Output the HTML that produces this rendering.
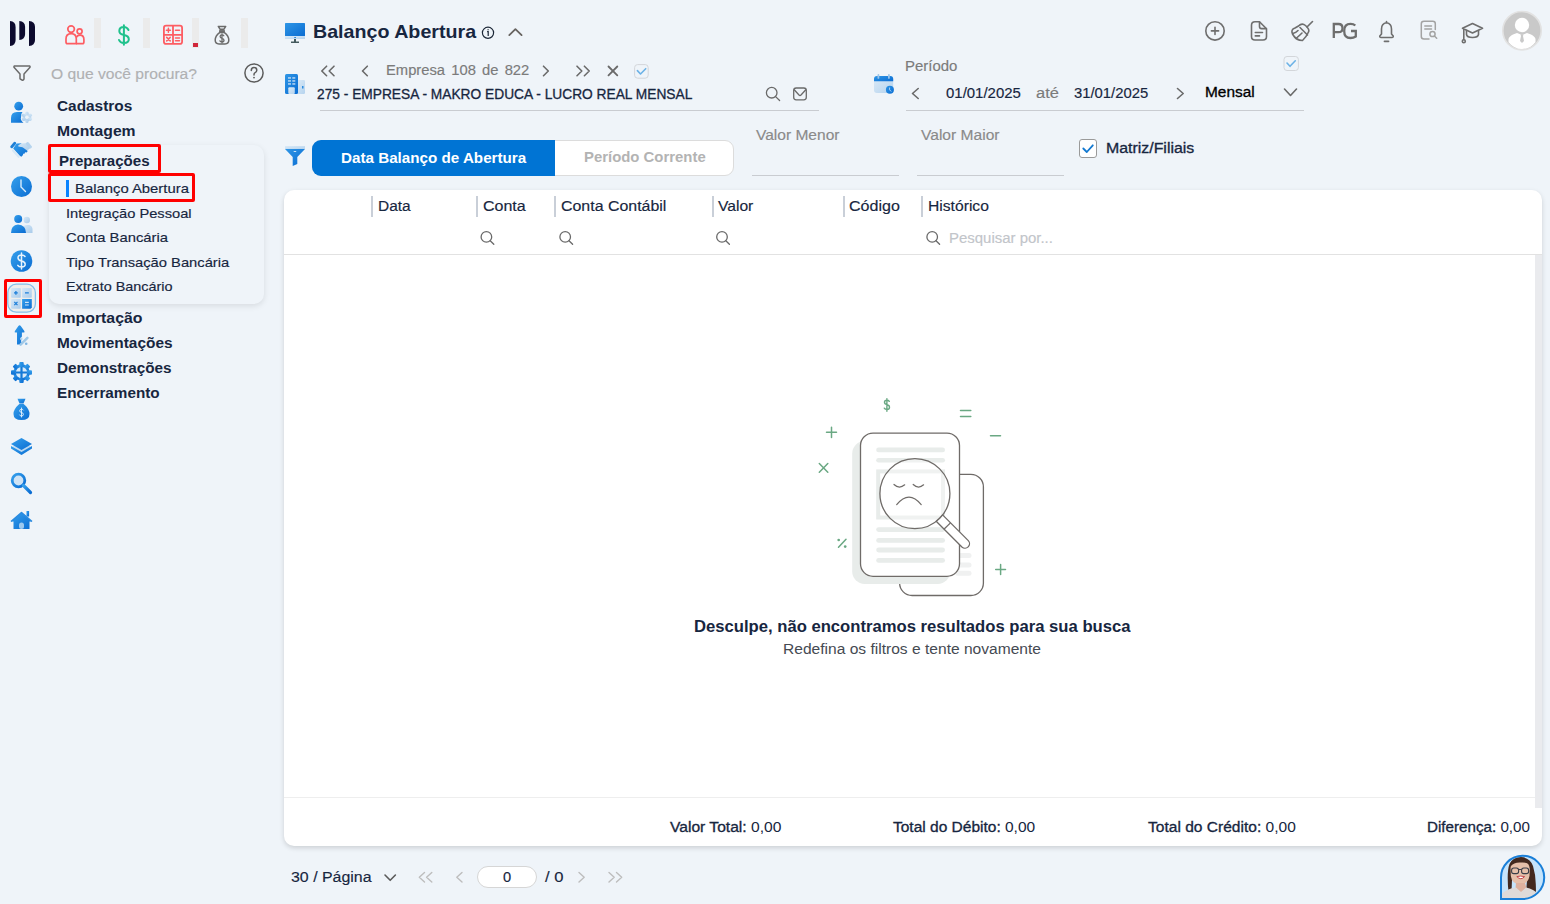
<!DOCTYPE html>
<html><head><meta charset="utf-8"><title>Balanço Abertura</title>
<style>
html,body{margin:0;padding:0;}
body{width:1550px;height:904px;overflow:hidden;background:#eff4f9;font-family:"Liberation Sans",sans-serif;position:relative;}
.t{position:absolute;white-space:nowrap;line-height:1;transform-origin:0 0;}
.a{position:absolute;}
svg{position:absolute;overflow:visible;}
</style></head><body>
<!-- submenu panel -->
<div class="a" style="left:49px;top:145px;width:215px;height:159px;border-radius:10px;background:#eff4f9;box-shadow:0 2px 6px rgba(0,0,0,0.10);"></div>
<!-- red boxes -->
<div class="a" style="left:48px;top:144px;width:113px;height:29px;box-sizing:border-box;border:3px solid #ff0000;border-radius:2px;"></div>
<div class="a" style="left:48px;top:173px;width:147px;height:29px;box-sizing:border-box;border:3px solid #ff0000;border-radius:2px;"></div>
<div class="a" style="left:66px;top:180px;width:3px;height:17px;background:#0a84ff;"></div>
<div class="a" style="left:4px;top:279px;width:38px;height:39px;box-sizing:border-box;border:3px solid #ff0000;border-radius:2px;"></div>
<!-- top app separators -->
<div class="a" style="left:94px;top:18px;width:7px;height:30px;background:#ebebeb;"></div>
<div class="a" style="left:143px;top:18px;width:7px;height:30px;background:#ebebeb;"></div>
<div class="a" style="left:192px;top:18px;width:7px;height:30px;background:#ebebeb;"></div>
<div class="a" style="left:241px;top:18px;width:7px;height:30px;background:#ebebeb;"></div>
<div class="a" style="left:193px;top:43px;width:5px;height:4px;background:#d0263a;"></div>
<!-- underlines -->
<div class="a" style="left:320px;top:110px;width:499px;height:1px;background:#c9ccd1;"></div>
<div class="a" style="left:906px;top:110px;width:398px;height:1px;background:#c9ccd1;"></div>
<div class="a" style="left:752px;top:175px;width:147px;height:1px;background:#c9ccd1;"></div>
<div class="a" style="left:917px;top:175px;width:147px;height:1px;background:#c9ccd1;"></div>
<!-- segmented -->
<div class="a" style="left:312px;top:140px;width:422px;height:36px;box-sizing:border-box;border:1px solid #dcdcdc;border-radius:9px;background:#fff;"></div>
<div class="a" style="left:312px;top:140px;width:243px;height:36px;border-radius:9px 0 0 9px;background:#0074d4;"></div>
<!-- checkbox Matriz -->
<div class="a" style="left:1079px;top:139px;width:18px;height:19px;box-sizing:border-box;border:1px solid #9a9a9a;border-radius:3px;background:#fff;"></div>
<!-- table card -->
<div class="a" style="left:284px;top:190px;width:1258px;height:656px;border-radius:10px;background:#fff;box-shadow:0 2px 5px rgba(0,0,0,0.15);"></div>
<div class="a" style="left:284px;top:254px;width:1258px;height:1px;background:#e2e2e2;"></div>
<div class="a" style="left:1535px;top:255px;width:7px;height:553px;background:#eaebee;"></div>
<div class="a" style="left:284px;top:797px;width:1251px;height:1px;background:#eeeeee;"></div>
<!-- column separators -->
<div class="a" style="left:371px;top:196px;width:2px;height:21px;background:#c9cfd8;"></div>
<div class="a" style="left:476px;top:196px;width:2px;height:21px;background:#c9cfd8;"></div>
<div class="a" style="left:554px;top:196px;width:2px;height:21px;background:#c9cfd8;"></div>
<div class="a" style="left:712px;top:196px;width:2px;height:21px;background:#c9cfd8;"></div>
<div class="a" style="left:843px;top:196px;width:2px;height:21px;background:#c9cfd8;"></div>
<div class="a" style="left:921px;top:196px;width:2px;height:21px;background:#c9cfd8;"></div>
<!-- pagination input -->
<div class="a" style="left:477px;top:866px;width:60px;height:22px;box-sizing:border-box;border:1px solid #d6d6d6;border-radius:11px;background:#fff;"></div>
<svg style="left:0;top:0" width="48" height="540" viewBox="0 0 48 540">
<defs>
<linearGradient id="gb" x1="0" y1="0" x2="1" y2="1"><stop offset="0" stop-color="#36a0ec"/><stop offset="1" stop-color="#0a6cd2"/></linearGradient>
<linearGradient id="gl" x1="0" y1="0" x2="1" y2="1"><stop offset="0" stop-color="#d6e8f7"/><stop offset="1" stop-color="#a9cbea"/></linearGradient>
</defs>
<!-- logo -->
<g fill="#0c0a2e">
<path d="M10 21 Q15.6 21.5 15.6 27 L15.6 40 Q15.6 45.5 10 46 Z"/>
<path d="M19.3 21 Q25.1 21.5 25.1 27 L25.1 34 Q25.1 39.5 19.3 40 Z"/>
<path d="M29 21 Q35 21.5 35 27 L35 40 Q35 45.5 29 46 Z"/>
</g>
<!-- filter outline -->
<path d="M14.5 66 L29.5 66 Q30.5 66.5 29.8 67.6 L24 74 L24 79 Q23.5 80.5 22 80 L20 78.8 L20 74 L14.2 67.6 Q13.5 66.5 14.5 66 Z" fill="none" stroke="#6b6b6b" stroke-width="1.5" stroke-linejoin="round"/>
<!-- user gear -->
<circle cx="18.7" cy="106.2" r="4.4" fill="url(#gb)"/>
<path d="M11 122.8 L11 118 Q11 112 17 112 L22.5 112 Q20.5 114 21 117.5 Q20 120 23.5 122.8 Z" fill="url(#gb)"/>
<g transform="translate(26.9 117.3)" fill="url(#gl)">
<circle r="4.3"/>
<rect x="-1.5" y="-5.6" width="3" height="11.2" rx="0.9"/>
<rect x="-1.5" y="-5.6" width="3" height="11.2" rx="0.9" transform="rotate(60)"/>
<rect x="-1.5" y="-5.6" width="3" height="11.2" rx="0.9" transform="rotate(120)"/>
<circle r="1.8" fill="#eff4f9"/>
</g>
<!-- handshake -->
<g>
<path d="M21.8 143.5 L27.2 143 L28.5 142.6 L31.8 146.4 L28.6 149.6 L26.5 150.3 L22.5 147.3 L18.5 146.5 L18.5 145 Z" fill="url(#gl)"/>
<rect x="27.4" y="141.6" width="3" height="7.2" rx="1.2" transform="rotate(-40 29 145.2)" fill="#b6d4ee"/>
<path d="M13.2 148.6 L16.5 143.6 L21.8 143.3 L18.4 145.2 L18.4 146.6 L22.6 147.3 L27.8 151 L26.6 152.4 L25 152.2 L24.8 153.6 L23.3 153.8 L22.8 155.2 L21.3 156.8 L19.8 155.8 Z" fill="url(#gb)"/>
<rect x="11.8" y="141.4" width="2.9" height="7.3" rx="1.2" transform="rotate(40 13.3 145)" fill="#1f80d6"/>
<path d="M13 150.5 L18.7 156.8" stroke="#d7e8f6" stroke-width="2.2" stroke-linecap="round"/>
</g>
<!-- clock -->
<circle cx="21.5" cy="186.5" r="10.5" fill="url(#gb)"/>
<path d="M21 180 L21 187 L25.5 191.5" fill="none" stroke="#d9ecfb" stroke-width="1.4" stroke-linecap="round"/>
<!-- people -->
<circle cx="26.8" cy="220" r="3.2" fill="url(#gl)"/>
<path d="M23 233 L23 227 Q24 225 27 225 L29 225 Q32 225.5 32.5 229 L32.5 233 Z" fill="url(#gl)"/>
<circle cx="18.2" cy="219" r="4" fill="url(#gb)"/>
<path d="M11 233 Q11 225 18 224.5 Q26 225 26 233 Z" fill="url(#gb)"/>
<!-- dollar -->
<circle cx="21.5" cy="261" r="10.8" fill="url(#gb)"/>
<path d="M25 256.5 Q24 255 21.5 255 Q18 255 18 257.8 Q18 260.3 21.5 261 Q25.2 261.8 25.2 264.3 Q25.2 267 21.5 267 Q18.7 267 17.8 265.3 M21.5 253 L21.5 269" fill="none" stroke="#e8f3fc" stroke-width="1.5" stroke-linecap="round"/>
<!-- calculator selected -->
<rect x="7.8" y="284.2" width="27.6" height="28" rx="8.5" fill="#eeeeec" stroke="#86bde8" stroke-width="1.3"/>
<rect x="11.1" y="288" width="9.7" height="9.7" rx="0.8" fill="url(#gl)"/>
<rect x="22.1" y="288" width="9.7" height="9.7" rx="0.8" fill="url(#gl)"/>
<rect x="11.1" y="299" width="9.7" height="9.7" rx="0.8" fill="url(#gl)"/>
<path d="M22.1 299 L31.8 299 L31.8 307.5 L30.6 308.7 L22.1 308.7 Z" fill="url(#gb)"/>
<path d="M15.9 291 L15.9 294.8 M14 292.9 L17.8 292.9 M25 292.9 L28.8 292.9 M14.3 301.9 L17.5 305.1 M17.5 301.9 L14.3 305.1" stroke="#1d7fd9" stroke-width="1.3"/>
<path d="M25 302.4 L28.8 302.4 M25 305 L28.8 305" stroke="#cfe4f6" stroke-width="1.1"/>
<!-- arrow percent -->
<path d="M19.6 325.2 Q20.2 325.2 20.8 326 L24.3 331 Q25.2 332.6 23.6 332.6 L21.9 332.6 L21.9 336.5 L20.8 338 L21.9 339.5 L20.8 341 L21.9 342.5 L21.9 344.5 L17 344.5 L17 332.6 L15.6 332.6 Q14 332.6 14.9 331 L18.4 326 Q19 325.2 19.6 325.2 Z" fill="url(#gb)"/>
<path d="M20.6 344.6 L27.4 337.8" stroke="#9fc8e8" stroke-width="2.5" stroke-linecap="round"/>
<circle cx="21.3" cy="338.7" r="1.3" fill="#b7d6ee"/><circle cx="26.2" cy="343.7" r="1.3" fill="#7fb6e3"/>
<!-- gear -->
<g transform="translate(21.5 372.5)">
<g fill="url(#gb)">
<circle r="8.3"/>
<rect x="-2.2" y="-10.5" width="4.4" height="21" rx="1"/>
<rect x="-2.2" y="-10.5" width="4.4" height="21" rx="1" transform="rotate(45)"/>
<rect x="-2.2" y="-10.5" width="4.4" height="21" rx="1" transform="rotate(90)"/>
<rect x="-2.2" y="-10.5" width="4.4" height="21" rx="1" transform="rotate(135)"/>
</g>
<circle r="5.6" fill="#d8eaf8"/>
<path d="M0 -5.6 L0 5.6 M-5.6 0 L5.6 0" stroke="#1479d6" stroke-width="2.2"/>
</g>
<!-- money bag -->
<path d="M17.5 398.8 L25.5 398.8 L23.5 403.5 L19.5 403.5 Z" fill="url(#gb)"/>
<path d="M19.3 404 L23.7 404 Q29.5 409 29.5 414 Q29.5 420 21.5 420 Q13.5 420 13.5 414 Q13.5 409 19.3 404 Z" fill="url(#gb)"/>
<path d="M23.3 410 Q22.8 409.2 21.5 409.2 Q19.7 409.2 19.7 410.8 Q19.7 412.2 21.5 412.5 Q23.4 412.9 23.4 414.4 Q23.4 416 21.5 416 Q20 416 19.6 415 M21.5 408 L21.5 417" fill="none" stroke="#e6f2fc" stroke-width="0.9" stroke-linecap="round"/>
<!-- layers -->
<path d="M21.5 441.5 L32 447.5 L21.5 455 L11 447.5 Z" fill="url(#gl)"/>
<path d="M11 446 L21.5 452 L32 446 L32 448.5 L21.5 455 L11 448.5 Z" fill="url(#gb)"/>
<path d="M21.5 438 L32 444 L21.5 450 L11 444 Z" fill="url(#gb)"/>
<!-- search -->
<circle cx="18.5" cy="480.5" r="6.3" fill="#cfe3f5" stroke="url(#gb)" stroke-width="2.8"/>
<path d="M23.5 485.5 L30.5 492.5" stroke="url(#gb)" stroke-width="3.2" stroke-linecap="round"/>
<!-- home -->
<path d="M21.5 512.5 L32 521.5 L29.5 521.5 L29.5 529 L13.5 529 L13.5 521.5 L11 521.5 Z" fill="url(#gb)"/>
<rect x="26.5" y="511" width="2.6" height="5.5" fill="url(#gb)"/>
<path d="M11 521.5 L21.5 512.5 L32 521.5" fill="none" stroke="#2a8be0" stroke-width="1.6" stroke-linejoin="round"/>
<rect x="19" y="522.5" width="5" height="6.5" rx="2.5" fill="#9cc8ee"/>
</svg>
<svg style="left:50px;top:10px" width="220" height="80" viewBox="50 10 220 80">
<!-- family (coral) -->
<g fill="none" stroke="#fd5d63" stroke-width="1.7" stroke-linejoin="round">
<circle cx="71.1" cy="29.1" r="3.3"/>
<circle cx="79.6" cy="31.3" r="2.5"/>
<path d="M76.3 43.7 L67.6 43.7 Q66 43.7 66 42 L66 39 Q66 33.6 71.2 33.6 Q76.3 33.6 76.3 39 Z"/>
<path d="M76.3 43.7 L82.3 43.7 Q83.9 43.7 83.9 42 L83.9 39.5 Q83.9 35.1 80 35.1 Q77.3 35.1 76.3 37.5"/>
</g>
<!-- dollar green -->
<path d="M128.5 30 Q127 27 123.8 27 Q119.3 27 119.3 31 Q119.3 34.2 124 35 Q128.8 35.9 128.8 39.3 Q128.8 43 124 43 Q120.2 43 119 40 M123.9 25.2 L123.9 44.8" fill="none" stroke="#1fc18c" stroke-width="2" stroke-linecap="round"/>
<!-- calculator coral -->
<g fill="none" stroke="#fd5d63" stroke-width="1.8">
<rect x="163.9" y="25.7" width="18.2" height="18.2" rx="2.2"/>
<path d="M173 25.7 L173 43.9 M163.9 34.8 L182.1 34.8"/>
</g>
<g stroke="#fd5d63" stroke-width="1.5" stroke-linecap="round">
<path d="M168.4 28.2 L168.4 32.3 M166.4 30.2 L170.4 30.2 M175.5 30.2 L179.5 30.2 M166.7 37.4 L170.2 40.9 M170.2 37.4 L166.7 40.9 M175.5 38 L179.5 38 M175.5 40.8 L179.5 40.8"/>
</g>
<!-- money bag gray -->
<g fill="none" stroke="#6b6b6b" stroke-width="1.5" stroke-linejoin="round">
<path d="M218.3 26.4 L225.7 26.4 L224 29.2 L220 29.2 Z"/>
<rect x="219.6" y="30.3" width="4.8" height="2" fill="#6b6b6b" stroke-width="1"/>
<path d="M219.6 32.6 Q215.2 36 215.2 40 Q215.2 43.9 219 43.9 L225 43.9 Q228.8 43.9 228.8 40 Q228.8 36 224.4 32.6 Z"/>
</g>
<path d="M223.8 35.8 Q223.3 34.9 222 34.9 Q220.1 34.9 220.1 36.6 Q220.1 38 222 38.3 Q224 38.7 224 40.2 Q224 41.9 222 41.9 Q220.5 41.9 219.9 40.9 M222 33.9 L222 42.9" fill="none" stroke="#6b6b6b" stroke-width="1.3" stroke-linecap="round"/>
<!-- question circle -->
<circle cx="254" cy="73" r="9.1" fill="none" stroke="#5c5c5c" stroke-width="1.5"/>
<path d="M251.3 70.5 Q251.3 67.6 254 67.6 Q256.8 67.6 256.8 70.2 Q256.8 72 254.5 73.2 Q254 73.6 254 75" fill="none" stroke="#5c5c5c" stroke-width="1.5" stroke-linecap="round"/>
<circle cx="254" cy="77.6" r="0.9" fill="#5c5c5c"/>
</svg>
<svg style="left:0;top:0" width="1550" height="904" viewBox="0 0 1550 904">
<defs>
<linearGradient id="hb" x1="0" y1="0" x2="1" y2="1"><stop offset="0" stop-color="#2f96e6"/><stop offset="1" stop-color="#0a6cd2"/></linearGradient>
<linearGradient id="hl" x1="0" y1="0" x2="1" y2="1"><stop offset="0" stop-color="#dbeaf7"/><stop offset="1" stop-color="#b5d3ee"/></linearGradient>
</defs>
<!-- monitor -->
<rect x="285" y="23" width="20" height="13" rx="0.6" fill="url(#hb)"/>
<rect x="285" y="36" width="20" height="3" fill="url(#hl)"/>
<rect x="294.3" y="37" width="1.6" height="1" fill="#1b7fd9"/>
<path d="M294 39 L296 39 L296 41.4 L299 41.4 L299 43 L291 43 L291 41.4 L294 41.4 Z" fill="#455a5e"/>
<!-- info -->
<circle cx="488" cy="32.8" r="5.6" fill="none" stroke="#1b2636" stroke-width="1.2"/>
<rect x="487.5" y="29.2" width="1.2" height="1.1" fill="#1b2636"/>
<path d="M487.1 31.6 L488.2 31.6 L488.2 36" fill="none" stroke="#1b2636" stroke-width="1.2"/>
<!-- chevron up -->
<path d="M509.3 35.1 L515.4 29.2 L521.6 35.1" fill="none" stroke="#676360" stroke-width="1.8" stroke-linecap="round" stroke-linejoin="round"/>
<!-- building -->
<rect x="297" y="80" width="8" height="14" rx="1.2" fill="url(#hl)"/>
<rect x="285" y="74" width="13" height="20" rx="1.5" fill="url(#hb)"/>
<g fill="#cfe3f6"><rect x="288" y="77.3" width="3" height="1.3"/><rect x="292.3" y="77.3" width="3" height="1.3"/><rect x="288" y="80.3" width="3" height="1.3"/><rect x="292.3" y="80.3" width="3" height="1.3"/><rect x="288" y="83.3" width="3" height="1.3"/><rect x="292.3" y="83.3" width="3" height="1.3"/></g>
<rect x="288.3" y="87.3" width="6.5" height="6.7" rx="1" fill="url(#hl)"/>
<rect x="302" y="86" width="1.5" height="2.5" fill="#2a8be0"/>
<!-- nav chevrons -->
<g fill="none" stroke="#6a6a6a" stroke-width="1.6" stroke-linecap="round" stroke-linejoin="round">
<path d="M326.6 66.2 L321.8 71 L326.6 75.7 M334 66.2 L329.2 71 L334 75.7"/>
<path d="M367.3 66.2 L362.5 71 L367.3 75.7"/>
<path d="M543.5 66.2 L548.3 71 L543.5 75.7"/>
<path d="M577 66.2 L581.8 71 L577 75.7 M584.4 66.2 L589.2 71 L584.4 75.7"/>
<path d="M608.5 66.5 L617.3 75.3 M617.3 66.5 L608.5 75.3" stroke-width="1.8"/>
</g>
<rect x="634.6" y="64.6" width="13.6" height="13.6" rx="3" fill="none" stroke="#d3d6da" stroke-width="1"/>
<path d="M637.4 70.6 L640.5 74 L645.7 68.7" fill="none" stroke="#6cb2e6" stroke-width="1.6" stroke-linecap="round" stroke-linejoin="round"/>
<!-- search + mail -->
<circle cx="771.7" cy="92.7" r="5.3" fill="none" stroke="#6a6a6a" stroke-width="1.3"/>
<path d="M775.6 96.6 L779.6 100.5" stroke="#6a6a6a" stroke-width="1.3" stroke-linecap="round"/>
<rect x="793.7" y="88" width="12.6" height="11.8" rx="2.5" fill="none" stroke="#6a6a6a" stroke-width="1.3"/>
<path d="M794 89.5 L799 95 Q800 96 801 95 L806 89.5" fill="none" stroke="#6a6a6a" stroke-width="1.3"/>
<!-- calendar -->
<rect x="874" y="76" width="19.2" height="17" rx="3" fill="url(#hl)"/>
<path d="M874 81.3 L874 79 Q874 76 877 76 L890.2 76 Q893.2 76 893.2 79 L893.2 81.3 Z" fill="url(#hb)"/>
<rect x="877.5" y="74" width="1.8" height="4.8" rx="0.9" fill="#9cc5ea"/>
<rect x="888" y="74" width="1.8" height="4.8" rx="0.9" fill="#9cc5ea"/>
<circle cx="889.9" cy="89.7" r="4" fill="url(#hb)"/>
<path d="M889.6 87.5 L889.6 89.8 L891.2 91.5" fill="none" stroke="#cfe5f8" stroke-width="0.8"/>
<!-- period chevrons -->
<g fill="none" stroke="#6a6a6a" stroke-width="1.6" stroke-linecap="round" stroke-linejoin="round">
<path d="M918.2 88.5 L912.5 93.5 L918.2 98.5"/>
<path d="M1177.5 88.5 L1183.2 93.5 L1177.5 98.5"/>
<path d="M1284.5 89 L1290.5 95.5 L1296.5 89"/>
</g>
<rect x="1284" y="56.5" width="14.4" height="14" rx="3" fill="none" stroke="#d3d6da" stroke-width="1"/>
<path d="M1287 63 L1290 66.3 L1295.3 60.8" fill="none" stroke="#6cb2e6" stroke-width="1.6" stroke-linecap="round" stroke-linejoin="round"/>
<!-- top right icons -->
<g fill="none" stroke="#6e6e6e" stroke-width="1.6" stroke-linecap="round" stroke-linejoin="round">
<circle cx="1215" cy="30.9" r="9.2"/>
<path d="M1215 27.3 L1215 34.5 M1211.4 30.9 L1218.6 30.9"/>
<path d="M1256 21.8 L1259.5 21.8 L1266.5 28.8 L1266.5 36.5 Q1266.5 40 1263 40 L1255 40 Q1251.5 40 1251.5 36.5 L1251.5 25.3 Q1251.5 21.8 1255 21.8 Z"/>
<path d="M1259.5 22 L1259.5 26.5 Q1259.5 28.6 1261.6 28.6 L1266.3 28.6"/>
<path d="M1255.3 32.5 L1262.5 32.5 M1255.3 35.9 L1259.5 35.9"/>
<path d="M1312.5 21.5 L1307 27"/>
<path d="M1305.5 25.5 Q1302 22.5 1298.5 26 L1295 28 Q1290.5 29.5 1292.5 34 Q1296 40.5 1302.5 40.5 Q1306 37.5 1308.5 32 Q1310 29.5 1305.5 25.5 Z"/>
<path d="M1300 27.5 L1307.5 35 M1292.8 33.6 Q1296 32.5 1298 30.5 M1296 38.5 Q1299 36 1302 33"/>
<path d="M1386.5 21.5 L1386.5 22.8 M1386.5 22.8 Q1381.5 23.5 1381.5 29 L1381.5 34 L1379.8 36 Q1379.5 37.5 1381 37.5 L1392 37.5 Q1393.5 37.5 1393.2 36 L1391.5 34 L1391.5 29 Q1391.5 23.5 1386.5 22.8"/>
<path d="M1384.5 41.3 L1388.5 41.3" stroke-width="1.8"/>
<path d="M1472.5 23.5 L1482.5 28.3 L1472.5 33 L1462.5 28.3 Z"/>
<path d="M1466.5 30.5 L1466.5 34.5 Q1467 37.3 1472.5 37.5 Q1478 37.3 1478.5 34.5 L1478.5 30.5"/>
<path d="M1463.8 29 L1463.8 39.5"/>
<circle cx="1463.8" cy="41.3" r="1.5"/>
</g>
<g fill="none" stroke="#a3a3a3" stroke-width="1.5" stroke-linecap="round">
<path d="M1435.3 29.5 L1435.3 23.8 Q1435.3 21.3 1432.8 21.3 L1424 21.3 Q1421.3 21.3 1421.3 23.8 L1421.3 36.5 Q1421.3 39 1424 39 L1429 39"/>
<path d="M1424.8 26 L1431.5 26 M1424.8 29 L1431.5 29"/>
<circle cx="1432.5" cy="34" r="2.6"/>
<path d="M1434.4 36 L1436.7 38.3"/>
</g>
<path d="M1333.8 37.9 L1333.8 24 L1338.5 24 Q1342.5 24 1342.5 28.2 Q1342.5 32.2 1338.5 32.2 L1333.8 32.2" fill="none" stroke="#6e6e6e" stroke-width="2.3"/>
<path d="M1355.3 25.5 Q1353.5 23.8 1350.5 23.8 Q1344.2 23.8 1344.2 30.9 Q1344.2 38 1350.5 38 Q1353.5 38 1355.8 36.5 L1355.8 31 L1351 31" fill="none" stroke="#6e6e6e" stroke-width="2.3"/>
<!-- avatar -->
<circle cx="1522" cy="30.7" r="19.2" fill="#c9c9c9" stroke="#e2e2e2" stroke-width="1.6"/>
<circle cx="1522" cy="25" r="7.2" fill="#fff"/>
<path d="M1508.5 42.2 L1508.5 39 Q1509 36.5 1513 34.5 L1517 33 L1522 35 L1527 33 L1531 34.5 Q1535 36.5 1535.5 39 L1535.5 42.2 Q1530 49 1522 49 Q1514 49 1508.5 42.2 Z" fill="#fff"/>
<path d="M1520.5 34.5 L1523.5 34.5 L1523 36 L1524 41 L1522 43 L1520 41 L1521 36 Z" fill="#c9c9c9"/>
<!-- blue funnel -->
<rect x="285" y="146" width="20" height="3" fill="url(#hl)"/>
<path d="M285 149 L305 149 L297.3 157 L297.3 164 L292.7 166 L292.7 157 Z" fill="url(#hb)"/>
<rect x="293.7" y="151" width="2.5" height="0.9" fill="#e0eefa"/>
<!-- matriz checkbox check -->
<path d="M1083.3 148.5 L1086.8 152 L1092.8 145.3" fill="none" stroke="#1379d1" stroke-width="1.8" stroke-linecap="round" stroke-linejoin="round"/>
<!-- table search icons -->
<g fill="none" stroke="#6a6a6a" stroke-width="1.3" stroke-linecap="round">
<circle cx="486.4" cy="236.9" r="5.3"/><path d="M490.2 240.7 L493.8 244.3"/>
<circle cx="565.2" cy="236.9" r="5.3"/><path d="M569 240.7 L572.6 244.3"/>
<circle cx="722" cy="236.9" r="5.3"/><path d="M725.8 240.7 L729.4 244.3"/>
<circle cx="932.2" cy="236.9" r="5.3"/><path d="M936 240.7 L939.6 244.3"/>
</g>
<!-- pagination arrows -->
<path d="M385 875 L390.2 880.3 L395.4 875" fill="none" stroke="#5a5a5a" stroke-width="1.6" stroke-linecap="round" stroke-linejoin="round"/>
<g fill="none" stroke="#bdbdbd" stroke-width="1.4" stroke-linecap="round" stroke-linejoin="round">
<path d="M424.5 872.5 L419.3 877.3 L424.5 882 M431.8 872.5 L426.6 877.3 L431.8 882"/>
<path d="M462 872.5 L456.8 877.3 L462 882"/>
<path d="M579 872.5 L584.2 877.3 L579 882"/>
<path d="M609 872.5 L614.2 877.3 L609 882 M616.5 872.5 L621.7 877.3 L616.5 882"/>
</g>
</svg>
<svg style="left:800px;top:390px" width="230" height="220" viewBox="800 390 230 220">
<g fill="none" stroke="#6aa883" stroke-width="1.5" stroke-linecap="round">
<path d="M826.5 432.3 L836.5 432.3 M831.5 427.2 L831.5 437.4"/>
<path d="M819.3 463.6 L827.8 472.3 M827.8 463.6 L819.3 472.3"/>
<path d="M960.5 410.5 L970.8 410.5 M960.5 416.4 L970.8 416.4"/>
<path d="M990.5 435.8 L1000.5 435.8"/>
<path d="M995.7 569.4 L1005.5 569.4 M1000.6 564.4 L1000.6 574.5"/>
<path d="M838.5 547.3 L846 539.3"/>
</g>
<circle cx="838.7" cy="540" r="1.35" fill="#6aa883"/>
<circle cx="845.2" cy="546.6" r="1.35" fill="#6aa883"/>
<path d="M889.3 401.3 Q888.6 400.2 886.9 400.2 Q884.5 400.2 884.5 402.3 Q884.5 404.1 886.9 404.6 Q889.5 405.1 889.5 407.2 Q889.5 409.4 886.9 409.4 Q885 409.4 884.3 408.2 M886.9 398.6 L886.9 411.3" fill="none" stroke="#6aa883" stroke-width="1.4" stroke-linecap="round"/>
<!-- back doc -->
<rect x="899.6" y="474.3" width="83.8" height="121.2" rx="12.5" fill="#fff" stroke="#6f6b68" stroke-width="1.3"/>
<g fill="#f0f1f1"><rect x="955" y="553" width="16.5" height="5" rx="2.5"/><rect x="955" y="562.5" width="16.5" height="5" rx="2.5"/><rect x="955" y="570.8" width="16.5" height="5" rx="2.5"/></g>
<!-- shadow doc -->
<rect x="852.2" y="441" width="98" height="143" rx="12.5" fill="#e8ecea"/>
<!-- front doc -->
<rect x="860.5" y="433.1" width="99" height="143.2" rx="12.5" fill="#fff" stroke="#6f6b68" stroke-width="1.3"/>
<g fill="#e8ecea">
<rect x="876.2" y="447.6" width="68.8" height="4.6" rx="2.3"/>
<rect x="876.2" y="457.9" width="68.8" height="4.6" rx="2.3"/>
<rect x="876.2" y="527.2" width="68.8" height="4.8" rx="2.4"/>
<rect x="876.2" y="538" width="68.8" height="4.8" rx="2.4"/>
<rect x="876.2" y="547.6" width="68.8" height="4.8" rx="2.4"/>
<rect x="876.2" y="558" width="68.8" height="4.8" rx="2.4"/>
</g>
<rect x="878.2" y="471.4" width="64.8" height="46.1" fill="none" stroke="#e8ecea" stroke-width="4"/>
<!-- magnifier handle -->
<path d="M936.2 521.3 L961.9 547.0 A4.53 4.53 0 0 0 968.3 540.6 L942.6 514.9 Z" fill="#fff" stroke="#6f6b68" stroke-width="1.3" stroke-linejoin="round"/>
<path d="M943.9 529.2 L950.5 522.9" stroke="#6f6b68" stroke-width="1.3"/>
<circle cx="914.9" cy="493.6" r="35" fill="#fff" fill-opacity="0.35" stroke="#6f6b68" stroke-width="1.3"/>
<g fill="none" stroke="#6f6b68" stroke-width="1.2" stroke-linecap="round">
<path d="M894 484.5 Q899.3 489.5 904.7 484.8"/>
<path d="M913.2 484.5 Q918.5 489.5 923.6 484.8"/>
<path d="M896.7 504.6 Q909 489.5 921.2 504.6"/>
</g>
</svg>
<svg style="left:1494px;top:850px" width="56" height="54" viewBox="1494 850 56 54">
<defs><clipPath id="drop"><path d="M1501 899 L1501 877.5 A21.6 21.6 0 1 1 1522.6 899 Z"/></clipPath></defs>
<path d="M1501 899 L1501 877.5 A21.6 21.6 0 1 1 1522.6 899 Z" fill="#c6e4fb"/>
<g clip-path="url(#drop)">
<path d="M1508.5 892 Q1506.5 872 1509.5 864 Q1513 857 1521 857 Q1530 857.5 1533 866 Q1535.5 874 1535.8 884 Q1536 890 1536 893 L1526 893 L1527 880 L1512 880 L1511.5 892 Z" fill="#43291f"/>
<path d="M1510.5 868 Q1511 860.5 1520 860.5 Q1529.5 861 1529.8 869 L1529.5 876 Q1528 884 1520 884.5 Q1512 884 1510.8 876 Z" fill="#e6bfa9"/>
<path d="M1510.5 866.5 Q1514 862 1521 862.5 Q1527 862 1530 865 L1530 862 Q1526 858.5 1520 858.5 Q1512.5 859 1510.5 863 Z" fill="#43291f"/>
<g fill="none" stroke="#3c3f49" stroke-width="1.1"><rect x="1511.6" y="868" width="7" height="5.6" rx="2.2"/><rect x="1521.6" y="868" width="7" height="5.6" rx="2.2"/><path d="M1518.6 869.5 L1521.6 869.5"/></g>
<path d="M1516.8 876.6 Q1520.5 875.6 1524.6 876.6 Q1521 880.8 1516.8 876.6 Z" fill="#fff" stroke="#c23a3e" stroke-width="0.9"/>
<path d="M1516 883 L1525 883 L1526.5 888 L1521 892.5 L1515.5 888 Z" fill="#dfb19e"/>
<path d="M1500 900 L1502 893.5 Q1509 888 1516 887.5 L1521 892 L1526 887.5 Q1534 889 1538 894 L1541 900 Z" fill="#dedad9"/>
</g>
<path d="M1501 899 L1501 877.5 A21.6 21.6 0 1 1 1522.6 899 Z" fill="none" stroke="#1a7fd8" stroke-width="2"/>
</svg>

<div class="t" id="t0" style="left:51.2px;top:66.55px;font-size:14px;font-weight:400;color:#b0b1b3;transform:scaleX(1.1168);-webkit-text-stroke:0.15px currentColor;">O que você procura?</div>
<div class="t" id="t1" style="left:57.3px;top:99.35px;font-size:14px;font-weight:700;color:#172640;transform:scaleX(1.0985);">Cadastros</div>
<div class="t" id="t2" style="left:57.3px;top:123.95px;font-size:14px;font-weight:700;color:#172640;transform:scaleX(1.1229);">Montagem</div>
<div class="t" id="t3" style="left:58.9px;top:154.15px;font-size:14px;font-weight:700;color:#172640;transform:scaleX(1.0774);">Preparações</div>
<div class="t" id="t4" style="left:75.2px;top:181.90px;font-size:13px;font-weight:400;color:#172640;transform:scaleX(1.1420);-webkit-text-stroke:0.15px currentColor;">Balanço Abertura</div>
<div class="t" id="t5" style="left:66.4px;top:207.00px;font-size:13px;font-weight:400;color:#172640;transform:scaleX(1.1288);-webkit-text-stroke:0.15px currentColor;">Integração Pessoal</div>
<div class="t" id="t6" style="left:66.4px;top:231.20px;font-size:13px;font-weight:400;color:#172640;transform:scaleX(1.1378);-webkit-text-stroke:0.15px currentColor;">Conta Bancária</div>
<div class="t" id="t7" style="left:66.4px;top:256.00px;font-size:13px;font-weight:400;color:#172640;transform:scaleX(1.1333);-webkit-text-stroke:0.15px currentColor;">Tipo Transação Bancária</div>
<div class="t" id="t8" style="left:66.4px;top:279.70px;font-size:13px;font-weight:400;color:#172640;transform:scaleX(1.1083);-webkit-text-stroke:0.15px currentColor;">Extrato Bancário</div>
<div class="t" id="t9" style="left:57.3px;top:311.15px;font-size:14px;font-weight:700;color:#172640;transform:scaleX(1.1333);">Importação</div>
<div class="t" id="t10" style="left:57.3px;top:336.15px;font-size:14px;font-weight:700;color:#172640;transform:scaleX(1.1000);">Movimentações</div>
<div class="t" id="t11" style="left:57.3px;top:361.15px;font-size:14px;font-weight:700;color:#172640;transform:scaleX(1.0905);">Demonstrações</div>
<div class="t" id="t12" style="left:57.3px;top:386.15px;font-size:14px;font-weight:700;color:#172640;transform:scaleX(1.0904);">Encerramento</div>
<div class="t" id="t13" style="left:312.7px;top:23.34px;font-size:18.5px;font-weight:700;color:#172640;transform:scaleX(1.0623);">Balanço Abertura</div>
<div class="t" id="t14" style="left:385.7px;top:63.05px;font-size:14px;font-weight:400;color:#7b7b7b;transform:scaleX(1.0537);-webkit-text-stroke:0.15px currentColor;word-spacing:2px;">Empresa 108 de 822</div>
<div class="t" id="t15" style="left:317.4px;top:87.05px;font-size:14px;font-weight:400;color:#172640;transform:scaleX(0.9819);-webkit-text-stroke:0.3px currentColor;">275 - EMPRESA - MAKRO EDUCA - LUCRO REAL MENSAL</div>
<div class="t" id="t16" style="left:904.7px;top:59.45px;font-size:14px;font-weight:400;color:#7b7b7b;transform:scaleX(1.0673);-webkit-text-stroke:0.15px currentColor;">Período</div>
<div class="t" id="t17" style="left:946.2px;top:85.95px;font-size:14px;font-weight:400;color:#172640;transform:scaleX(1.0686);-webkit-text-stroke:0.15px currentColor;">01/01/2025</div>
<div class="t" id="t18" style="left:1036.0px;top:85.95px;font-size:14px;font-weight:400;color:#7b7b7b;transform:scaleX(1.1737);-webkit-text-stroke:0.15px currentColor;">até</div>
<div class="t" id="t19" style="left:1073.9px;top:86.15px;font-size:14px;font-weight:400;color:#172640;transform:scaleX(1.0586);-webkit-text-stroke:0.15px currentColor;">31/01/2025</div>
<div class="t" id="t20" style="left:1205.0px;top:85.15px;font-size:14px;font-weight:400;color:#000000;transform:scaleX(1.1000);-webkit-text-stroke:0.3px currentColor;">Mensal</div>
<div class="t" id="t21" style="left:341.4px;top:150.55px;font-size:14px;font-weight:700;color:#ffffff;transform:scaleX(1.0854);">Data Balanço de Abertura</div>
<div class="t" id="t22" style="left:583.7px;top:150.15px;font-size:14px;font-weight:700;color:#b3b3b3;transform:scaleX(1.0640);">Período Corrente</div>
<div class="t" id="t23" style="left:756.4px;top:128.15px;font-size:14px;font-weight:400;color:#8a8a8a;transform:scaleX(1.1093);-webkit-text-stroke:0.15px currentColor;">Valor Menor</div>
<div class="t" id="t24" style="left:921.0px;top:128.15px;font-size:14px;font-weight:400;color:#8a8a8a;transform:scaleX(1.1127);-webkit-text-stroke:0.15px currentColor;">Valor Maior</div>
<div class="t" id="t25" style="left:1105.8px;top:141.05px;font-size:14px;font-weight:400;color:#172640;transform:scaleX(1.1346);-webkit-text-stroke:0.3px currentColor;">Matriz/Filiais</div>
<div class="t" id="t26" style="left:377.6px;top:199.45px;font-size:14px;font-weight:400;color:#172640;transform:scaleX(1.1033);-webkit-text-stroke:0.15px currentColor;">Data</div>
<div class="t" id="t27" style="left:482.5px;top:199.45px;font-size:14px;font-weight:400;color:#172640;transform:scaleX(1.1432);-webkit-text-stroke:0.15px currentColor;">Conta</div>
<div class="t" id="t28" style="left:561.0px;top:199.45px;font-size:14px;font-weight:400;color:#172640;transform:scaleX(1.1376);-webkit-text-stroke:0.15px currentColor;">Conta Contábil</div>
<div class="t" id="t29" style="left:718.3px;top:199.45px;font-size:14px;font-weight:400;color:#172640;transform:scaleX(1.1156);-webkit-text-stroke:0.15px currentColor;">Valor</div>
<div class="t" id="t30" style="left:849.2px;top:199.45px;font-size:14px;font-weight:400;color:#172640;transform:scaleX(1.1455);-webkit-text-stroke:0.15px currentColor;">Código</div>
<div class="t" id="t31" style="left:927.6px;top:199.45px;font-size:14px;font-weight:400;color:#172640;transform:scaleX(1.1185);-webkit-text-stroke:0.15px currentColor;">Histórico</div>
<div class="t" id="t32" style="left:949.4px;top:231.35px;font-size:14px;font-weight:400;color:#c2c5ca;transform:scaleX(1.0680);-webkit-text-stroke:0.15px currentColor;">Pesquisar por...</div>
<div class="t" id="t33" style="left:694.2px;top:618.76px;font-size:16px;font-weight:700;color:#172640;transform:scaleX(1.0400);">Desculpe, não encontramos resultados para sua busca</div>
<div class="t" id="t34" style="left:783.3px;top:642.15px;font-size:14px;font-weight:300;color:#454a52;transform:scaleX(1.1125);">Redefina os filtros e tente novamente</div>
<div class="t" id="t35" style="left:670.0px;top:820.15px;font-size:14px;font-weight:400;color:#172640;transform:scaleX(1.1150);-webkit-text-stroke:0.3px currentColor;">Valor Total: <span style="-webkit-text-stroke:0">0,00</span></div>
<div class="t" id="t36" style="left:893.3px;top:820.15px;font-size:14px;font-weight:400;color:#172640;transform:scaleX(1.1070);-webkit-text-stroke:0.3px currentColor;">Total do Débito: <span style="-webkit-text-stroke:0">0,00</span></div>
<div class="t" id="t37" style="left:1147.6px;top:820.15px;font-size:14px;font-weight:400;color:#172640;transform:scaleX(1.1105);-webkit-text-stroke:0.3px currentColor;">Total do Crédito: <span style="-webkit-text-stroke:0">0,00</span></div>
<div class="t" id="t38" style="left:1427.3px;top:820.15px;font-size:14px;font-weight:400;color:#172640;transform:scaleX(1.0842);-webkit-text-stroke:0.3px currentColor;">Diferença: <span style="-webkit-text-stroke:0">0,00</span></div>
<div class="t" id="t39" style="left:290.5px;top:868.68px;font-size:15.5px;font-weight:400;color:#172640;transform:scaleX(1.0269);-webkit-text-stroke:0.15px currentColor;">30 / Página</div>
<div class="t" id="t40" style="left:503.0px;top:868.68px;font-size:15.5px;font-weight:400;color:#172640;transform:scaleX(0.9444);-webkit-text-stroke:0.15px currentColor;">0</div>
<div class="t" id="t41" style="left:544.7px;top:868.68px;font-size:15.5px;font-weight:400;color:#172640;transform:scaleX(1.0706);-webkit-text-stroke:0.15px currentColor;">/ 0</div>
</body></html>
